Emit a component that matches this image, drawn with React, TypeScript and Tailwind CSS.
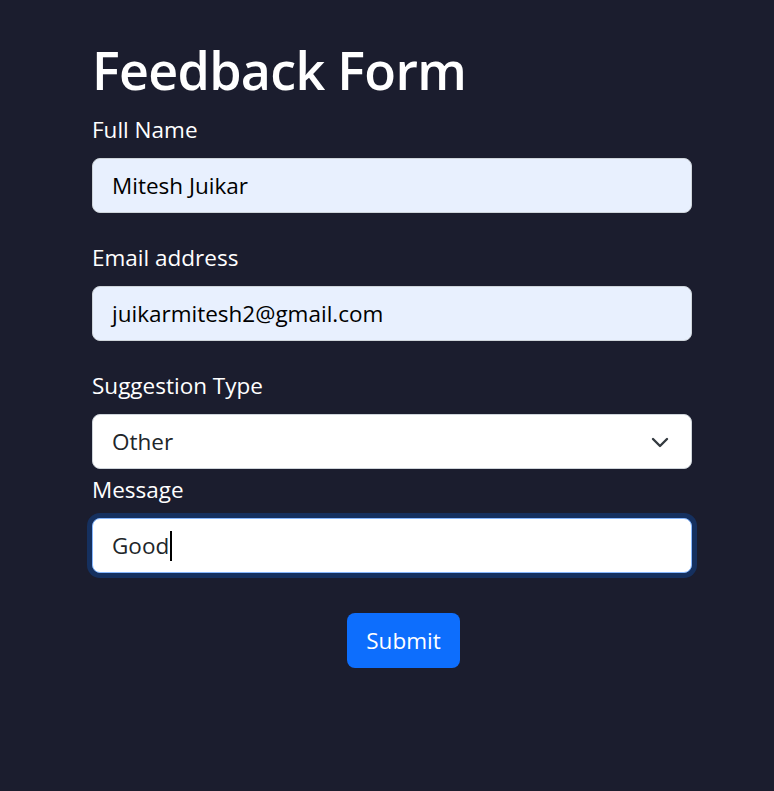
import React from 'react';

const font = { fontFamily: '"Open Sans", "Noto Sans", sans-serif' };

function Field({ label, children, last }: { label: string; children: React.ReactNode; last?: boolean }) {
  return (
    <div className={last ? 'mb-[6px]' : 'mb-[30px]'}>
      <div className="text-[22.5px] leading-[30px] text-white mb-[13px]">{label}</div>
      {children}
    </div>
  );
}

export default function App() {
  return (
    <div className="min-h-[791px] w-full bg-[#1b1d2e]" style={font}>
      <div className="w-[600px] ml-[92px] pt-[35px]">
        <h1 className="text-[52px] leading-[70px] font-semibold text-white tracking-[-0.7px] mb-[10px]">
          Feedback Form
        </h1>

        <Field label="Full Name">
          <div className="h-[55px] rounded-[8px] border border-[#ced4da] bg-[#e8f0fe] px-[19px] pt-[1px] flex items-center text-[22.5px] text-black">
            Mitesh Juikar
          </div>
        </Field>

        <Field label="Email address">
          <div className="h-[55px] rounded-[8px] border border-[#ced4da] bg-[#e8f0fe] px-[19px] pt-[1px] flex items-center text-[22.5px] text-black">
            juikarmitesh2@gmail.com
          </div>
        </Field>

        <Field label="Suggestion Type" last>
          <div className="h-[55px] rounded-[8px] border border-[#ced4da] bg-white pl-[19px] pr-[22px] pt-[1px] flex items-center justify-between text-[22.5px] text-[#212529]">
            <span>Other</span>
            <svg width="18" height="12" viewBox="0 0 18 12" fill="none">
              <path d="M2 3l7 7 7-7" stroke="#343a40" strokeWidth="2.4" strokeLinecap="round" strokeLinejoin="round" />
            </svg>
          </div>
        </Field>

        <div>
          <div className="text-[22.5px] leading-[30px] text-white mb-[13px]">Message</div>
          <div className="h-[55px] rounded-[8px] border border-[#86b7fe] bg-white px-[19px] pt-[1px] flex items-center text-[22.5px] text-[#212529] shadow-[0_0_0_5px_#15305f]">
            <span>Good</span>
            <span className="inline-block w-[2px] h-[30px] bg-black ml-[1px]" />
          </div>
        </div>

        <div className="flex justify-center mt-[40px]">
          <button className="h-[55px] w-[113px] rounded-[8px] bg-[#0d6efd] text-white text-[22.5px] ml-[23px]">
            Submit
          </button>
        </div>
      </div>
    </div>
  );
}
